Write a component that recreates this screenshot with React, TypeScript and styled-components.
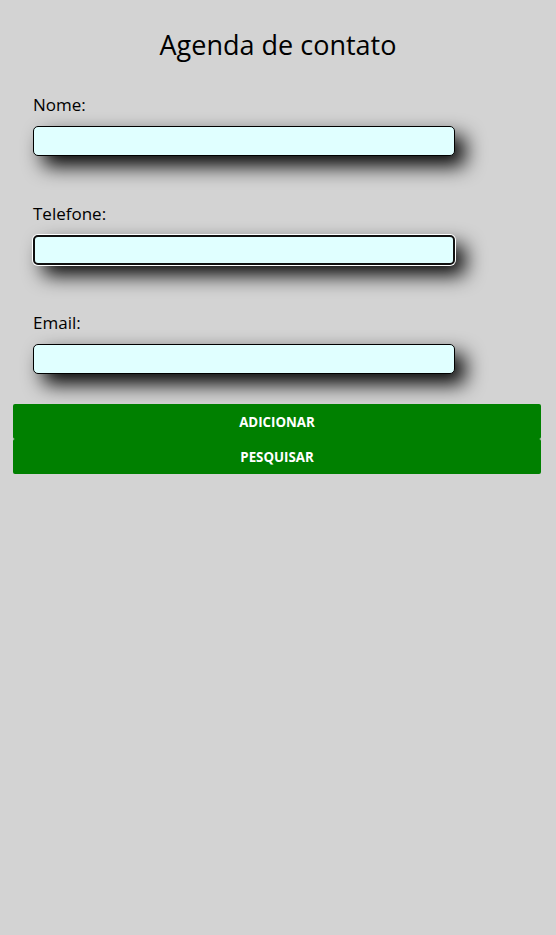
import React from 'react'
import styled, { createGlobalStyle } from 'styled-components'

const GlobalStyle = createGlobalStyle`
  html, body {
    margin: 0;
    padding: 0;
    background-color: #d3d3d3;
    min-height: 100%;
  }
  body {
    font-family: "Open Sans", "Noto Sans", sans-serif;
    color: #000;
  }
`

const Page = styled.div`
  min-height: 935px;
  padding-top: 26px;
  box-sizing: border-box;
`

const Title = styled.h1`
  margin: 0 0 30px;
  text-align: center;
  font-size: 27px;
  font-weight: 400;
  line-height: 38px;
`

const Form = styled.form`
  width: 528px;
  margin: 0 0 0 13px;
`

const Field = styled.div`
  padding-left: 20px;
  margin-bottom: 47px;

  &:last-of-type {
    margin-bottom: 30px;
  }
`

const Label = styled.label`
  display: block;
  font-size: 17px;
  line-height: 22px;
  margin-bottom: 10px;
`

const Input = styled.input<{ $active?: boolean }>`
  display: block;
  width: 422px;
  height: 30px;
  box-sizing: border-box;
  background-color: #e0ffff;
  border: ${props => props.$active ? '2px solid #101010' : '1px solid #000'};
  border-radius: 5px;
  outline: none;
  box-shadow: ${props => props.$active ? '0 0 0 1px #fff, ' : ''}10px 10px 20px #000;
  font-size: 16px;
`

const Button = styled.button`
  display: block;
  width: 100%;
  height: 35px;
  border: none;
  border-radius: 2px;
  background-color: #008000;
  color: #fff;
  font-family: "Open Sans", "Noto Sans", sans-serif;
  font-size: 13.3px;
  font-weight: 700;
  text-transform: uppercase;
  cursor: pointer;
`

const App = () => {
  return (
    <Page>
      <GlobalStyle />
      <Title>Agenda de contato</Title>
      <Form onSubmit={e => e.preventDefault()}>
        <Field>
          <Label htmlFor="nome">Nome:</Label>
          <Input id="nome" type="text" />
        </Field>
        <Field>
          <Label htmlFor="telefone">Telefone:</Label>
          <Input id="telefone" type="text" $active />
        </Field>
        <Field>
          <Label htmlFor="email">Email:</Label>
          <Input id="email" type="email" />
        </Field>
        <Button type="button">Adicionar</Button>
        <Button type="button">Pesquisar</Button>
      </Form>
    </Page>
  )
}

export default App
